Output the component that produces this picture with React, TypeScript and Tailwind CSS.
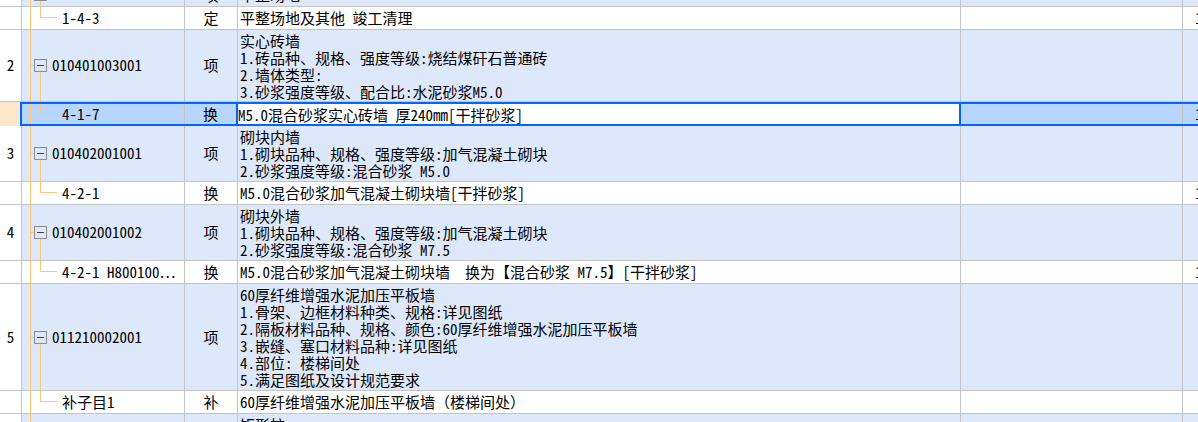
import React from "react";

const FONT =
  "font-['Noto_Sans_Mono_CJK_SC','Noto_Sans_CJK_SC',sans-serif] text-[15px] text-black";

type Item = {
  kind: "item";
  hc: string;
  h: number;
  num?: string;
  code: string;
  lines: string[];
  cy?: number;
  partial?: boolean;
};

type Child = {
  kind: "child";
  h: number;
  code: string;
  type: string;
  name: string;
  mark?: boolean;
  selected?: boolean;
};

type Row = Item | Child;

const ROWS: Row[] = [
  { kind: "item", hc: "h-[7px]", h: 7, code: "", lines: ["平整场地"], cy: -6, partial: true },
  { kind: "child", h: 23, code: "1-4-3", type: "定", name: "平整场地及其他 竣工清理", mark: true },
  {
    kind: "item",
    hc: "h-[72px]",
    h: 72,
    num: "2",
    code: "010401003001",
    lines: [
      "实心砖墙",
      "1.砖品种、规格、强度等级:烧结煤矸石普通砖",
      "2.墙体类型:",
      "3.砂浆强度等级、配合比:水泥砂浆M5.0",
    ],
  },
  {
    kind: "child",
    h: 24,
    code: "4-1-7",
    type: "换",
    name: "M5.0混合砂浆实心砖墙 厚240mm[干拌砂浆]",
    mark: true,
    selected: true,
  },
  {
    kind: "item",
    hc: "h-[56px]",
    h: 56,
    num: "3",
    code: "010402001001",
    lines: ["砌块内墙", "1.砌块品种、规格、强度等级:加气混凝土砌块", "2.砂浆强度等级:混合砂浆 M5.0"],
  },
  { kind: "child", h: 23, code: "4-2-1", type: "换", name: "M5.0混合砂浆加气混凝土砌块墙[干拌砂浆]", mark: true },
  {
    kind: "item",
    hc: "h-[56px]",
    h: 56,
    num: "4",
    code: "010402001002",
    lines: ["砌块外墙", "1.砌块品种、规格、强度等级:加气混凝土砌块", "2.砂浆强度等级:混合砂浆 M7.5"],
  },
  {
    kind: "child",
    h: 23,
    code: "4-2-1 H800100⋯",
    type: "换",
    name: "M5.0混合砂浆加气混凝土砌块墙  换为【混合砂浆 M7.5】[干拌砂浆]",
    mark: true,
  },
  {
    kind: "item",
    hc: "h-[107px]",
    h: 107,
    num: "5",
    code: "011210002001",
    lines: [
      "60厚纤维增强水泥加压平板墙",
      "1.骨架、边框材料种类、规格:详见图纸",
      "2.隔板材料品种、规格、颜色:60厚纤维增强水泥加压平板墙",
      "3.嵌缝、塞口材料品种:详见图纸",
      "4.部位: 楼梯间处",
      "5.满足图纸及设计规范要求",
    ],
  },
  { kind: "child", h: 23, code: "补子目1", type: "补", name: "60厚纤维增强水泥加压平板墙（楼梯间处）" },
  { kind: "item", hc: "h-[60px]", h: 60, num: "6", code: "010502001001", lines: ["矩形柱", "1.混凝土种类:商品混凝土"] },
];

const ORANGE = "#fcc878";

function Tree({ kind, h, cy }: { kind: "item" | "child"; h: number; cy: number }) {
  return (
    <svg className="absolute left-0 top-0 pointer-events-none" width={40} height={h}>
      <line x1={8.5} y1={0} x2={8.5} y2={h} stroke={ORANGE} />
      {kind === "item" ? (
        <>
          <line x1={8} y1={cy + 0.5} x2={12} y2={cy + 0.5} stroke={ORANGE} />
          <line x1={18.5} y1={cy + 7} x2={18.5} y2={h} stroke={ORANGE} />
          <rect x={12.5} y={cy - 5.5} width={12} height={12} fill="none" stroke="#8c8c8c" />
          <line x1={15} y1={cy + 0.5} x2={22} y2={cy + 0.5} stroke="#3c3c3c" />
        </>
      ) : (
        <>
          <line x1={18.5} y1={0} x2={18.5} y2={cy + 1} stroke={ORANGE} />
          <line x1={18} y1={cy + 0.5} x2={35} y2={cy + 0.5} stroke={ORANGE} />
        </>
      )}
    </svg>
  );
}

function ItemRow({ r }: { r: Item }) {
  const ch = r.h - 1;
  const cy = r.cy ?? Math.floor(ch / 2);
  return (
    <div className={`flex shrink-0 overflow-hidden border-b border-[#c4c4c4] bg-[#dde8fb] ${r.hc}`}>
      <div className="w-[22px] shrink-0 border-r border-[#c4c4c4] bg-white flex items-center justify-center">
        {r.num}
      </div>
      <div className="relative w-[163px] shrink-0 border-r border-[#c4c4c4] flex items-center overflow-hidden">
        <Tree kind="item" h={ch} cy={cy} />
        <span className="pl-[30px] whitespace-pre">{r.code}</span>
      </div>
      {r.partial ? (
        <>
          <div className="w-[53px] shrink-0 border-r border-[#c4c4c4] flex items-end justify-center pb-[3px] leading-[17px]">
            项
          </div>
          <div className="w-[723px] shrink-0 border-r border-[#c4c4c4] flex items-end pl-[2px] pb-[3px] leading-[17px]">
            {r.lines[0]}
          </div>
        </>
      ) : (
        <>
          <div className="w-[53px] shrink-0 border-r border-[#c4c4c4] flex items-center justify-center">项</div>
          <div className="w-[723px] shrink-0 border-r border-[#c4c4c4] pl-[2px] pt-[2px] leading-[17px] whitespace-pre">
            {r.lines.map((l) => (
              <div key={l}>{l}</div>
            ))}
          </div>
        </>
      )}
      <div className="w-[222px] shrink-0 border-r border-[#c4c4c4]" />
      <div className="flex-1" />
    </div>
  );
}

function ChildRow({ r }: { r: Child }) {
  if (r.selected) {
    return (
      <div className="flex h-[24px] shrink-0">
        <div className="w-[20px] shrink-0 bg-[#fde6c9]" />
        <div className="flex flex-1 border-y-2 border-l-2 border-[#0066ff] bg-[#b8d6fc] overflow-hidden">
          <div className="relative w-[163px] shrink-0 border-r border-[#c4c4c4] flex items-center">
            <Tree kind="child" h={20} cy={9} />
            <span className="pl-[40px] whitespace-pre">{r.code}</span>
          </div>
          <div className="w-[51px] shrink-0 flex items-center justify-center">{r.type}</div>
          <div className="w-[725px] shrink-0 border-x-2 border-[#0066ff] bg-white flex items-center leading-[17px] whitespace-pre">
            {r.name}
          </div>
          <div className="w-[222px] shrink-0 border-r border-[#c4c4c4]" />
          <div className="flex-1 flex items-center pl-[12px] overflow-hidden">1</div>
        </div>
      </div>
    );
  }
  return (
    <div className="flex h-[23px] shrink-0 border-b border-[#c4c4c4] bg-white">
      <div className="w-[22px] shrink-0 border-r border-[#c4c4c4]" />
      <div className="relative w-[163px] shrink-0 border-r border-[#c4c4c4] flex items-center overflow-hidden">
        <Tree kind="child" h={22} cy={10} />
        <span className="pl-[40px] whitespace-pre">{r.code}</span>
      </div>
      <div className="w-[53px] shrink-0 border-r border-[#c4c4c4] flex items-center justify-center">{r.type}</div>
      <div className="w-[723px] shrink-0 border-r border-[#c4c4c4] pl-[2px] pt-[2px] leading-[17px] whitespace-pre">
        {r.name}
      </div>
      <div className="w-[222px] shrink-0 border-r border-[#c4c4c4]" />
      <div className="flex-1 flex items-center pl-[12px] overflow-hidden">{r.mark ? "1" : ""}</div>
    </div>
  );
}

export default function App() {
  return (
    <div className={`w-[1198px] h-[422px] overflow-hidden bg-white flex flex-col ${FONT}`}>
      {ROWS.map((r, i) =>
        r.kind === "item" ? <ItemRow key={i} r={r} /> : <ChildRow key={i} r={r} />
      )}
    </div>
  );
}
